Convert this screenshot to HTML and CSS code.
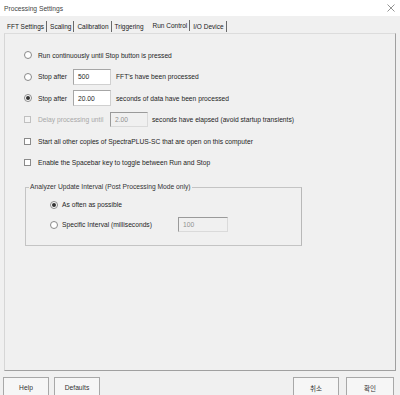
FILE: index.html
```html
<!DOCTYPE html>
<html>
<head>
<meta charset="utf-8">
<link rel="stylesheet" href="styles.css">
</head>
<body>
<div class="window">
  <div class="titlebar">
    <span class="title">Processing Settings</span>
    <svg class="close" width="8" height="8" viewBox="0 0 8 8"><path d="M0.5 0.5 L7.5 7.5 M7.5 0.5 L0.5 7.5" stroke="#777" stroke-width="0.8"/></svg>
  </div>
  <div class="tabs">
    <span class="tab sep">FFT Settings</span>
    <span class="tab sep">Scaling</span>
    <span class="tab sep">Calibration</span>
    <span class="tab">Triggering</span>
    <span class="tab active sep">Run Control</span>
    <span class="tab sep">I/O Device</span>
  </div>
  <div class="panel">
    <div class="rows">
      <div class="row"><span class="radio"></span><span class="txt">Run continuously until Stop button is pressed</span></div>
      <div class="row"><span class="radio"></span><span class="txt lbl">Stop after</span><span class="input">500</span><span class="txt after">FFT's have been processed</span></div>
      <div class="row"><span class="radio checked"></span><span class="txt lbl">Stop after</span><span class="input">20.00</span><span class="txt after">seconds of data have been processed</span></div>
      <div class="row"><span class="check disabled"></span><span class="txt lbl-delay disabled-txt">Delay processing until</span><span class="input small disabled">2.00</span><span class="txt after2">seconds have elapsed (avoid startup transients)</span></div>
      <div class="row"><span class="check"></span><span class="txt">Start all other copies of SpectraPLUS-SC that are open on this computer</span></div>
      <div class="row"><span class="check"></span><span class="txt">Enable the Spacebar key to toggle between Run and Stop</span></div>
    </div>
    <div class="group">
      <div class="legend">Analyzer Update Interval (Post Processing Mode only)</div>
      <div class="grow first"><span class="radio checked"></span><span class="txt">As often as possible</span></div>
      <div class="grow"><span class="radio"></span><span class="txt lbl-int">Specific Interval (milliseconds)</span><span class="input small wide disabled">100</span></div>
    </div>
  </div>
  <div class="footer">
    <div class="btns">
      <span class="btn">Help</span>
      <span class="btn">Defaults</span>
    </div>
    <div class="btns right">
      <span class="btn ko">취소</span>
      <span class="btn ko ok">확인</span>
    </div>
  </div>
</div>
</body>
</html>
```
FILE: styles.css
```css
* { box-sizing: border-box; }
html, body { margin: 0; padding: 0; }
body {
  font-family: "Liberation Sans", Arial, "Noto Sans CJK KR", sans-serif;
  font-size: 6.7px;
  color: #1e1e1e;
  background: #f0f0f0;
}
.window {
  width: 400px;
  height: 395px;
  overflow: hidden;
  background: #f0f0f0;
  display: flex;
  flex-direction: column;
}
.titlebar {
  height: 16px;
  background: #ffffff;
  display: flex;
  align-items: center;
  justify-content: space-between;
  padding: 0 5px 0 4px;
  flex-shrink: 0;
}
.title { color: #444; }
.close { display: block; }
.tabs {
  height: 17px;
  display: flex;
  align-items: center;
  padding-left: 7px;
  flex-shrink: 0;
  font-size: 6.5px;
}
.tab {
  display: flex;
  align-items: center;
  height: 11px;
  padding-right: 2px;
  margin-right: 3px;
  margin-top: 4px;
  color: #222;
}
.tab.sep { border-right: 1px solid #6a6a6a; }
.tab.active { margin-top: 2px; margin-left: 4px; }
.panel {
  margin: 0 4px;
  height: 338px;
  border: 1px solid #a0a0a0;
  border-left-color: #d6d6d6;
  border-top-color: #dcdcdc;
  padding: 13px 0 0 19px;
  flex-shrink: 0;
}
.rows {
  display: flex;
  flex-direction: column;
  gap: 5.5px;
}
.row, .grow {
  display: flex;
  align-items: center;
  height: 16px;
}
.radio {
  width: 8px;
  height: 8px;
  border: 1px solid #8a8a8a;
  border-radius: 50%;
  background: #fff;
  margin-right: 6px;
  flex-shrink: 0;
  display: flex;
  align-items: center;
  justify-content: center;
}
.radio.checked::after {
  content: "";
  width: 4px;
  height: 4px;
  border-radius: 50%;
  background: #333;
}
.check {
  width: 7px;
  height: 7px;
  border: 1px solid #8a8a8a;
  background: #fff;
  margin-right: 7px;
  flex-shrink: 0;
}
.check.disabled { border-color: #c0c0c0; background: #f4f4f4; }
.txt { white-space: nowrap; }
.lbl { width: 35px; }
.lbl-delay { width: 72px; }
.disabled-txt { color: #a8a8a8; }
.input {
  width: 38px;
  height: 16px;
  background: #fff;
  border: 1px solid #a6a6a6;
  border-bottom-color: #d0d0d0;
  border-right-color: #d0d0d0;
  padding-left: 4px;
  display: flex;
  align-items: center;
  color: #1e1e1e;
}
.input.small { height: 15px; }
.input.disabled { background: #f0f0f0; color: #909090; border-color: #9a9a9a; border-right-color: #dadada; border-bottom-color: #dadada; }
.input.wide { width: 50px; }
.after { margin-left: 5px; }
.after2 { margin-left: 4px; }
.group {
  margin-top: 16px;
  margin-left: 1px;
  width: 277px;
  height: 59px;
  border: 1px solid #c4c4c4;
  border-right-color: #b8b8b8;
  padding-left: 24px;
}
.legend {
  margin-top: -6px;
  margin-left: -21px;
  height: 10px;
  line-height: 10px;
  width: fit-content;
  padding: 0 1px;
  background: #f0f0f0;
  color: #333;
}
.grow .radio { margin-right: 4px; }
.grow.first { margin-top: 5px; }
.grow + .grow { margin-top: 4px; }
.lbl-int { width: 116px; }
.footer {
  display: flex;
  justify-content: space-between;
  padding: 6px 6px 0 3px;
}
.btns { display: flex; gap: 5px; }
.btns.right { gap: 7px; }
.btn {
  width: 46px;
  height: 21px;
  background: #f6f6f6;
  border: 1px solid #a8a8a8;
  display: flex;
  align-items: center;
  justify-content: center;
  color: #333;
}
.ko { font-family: "Noto Sans CJK KR", sans-serif; font-size: 6.5px; }
.ok { width: 48px; }
```
